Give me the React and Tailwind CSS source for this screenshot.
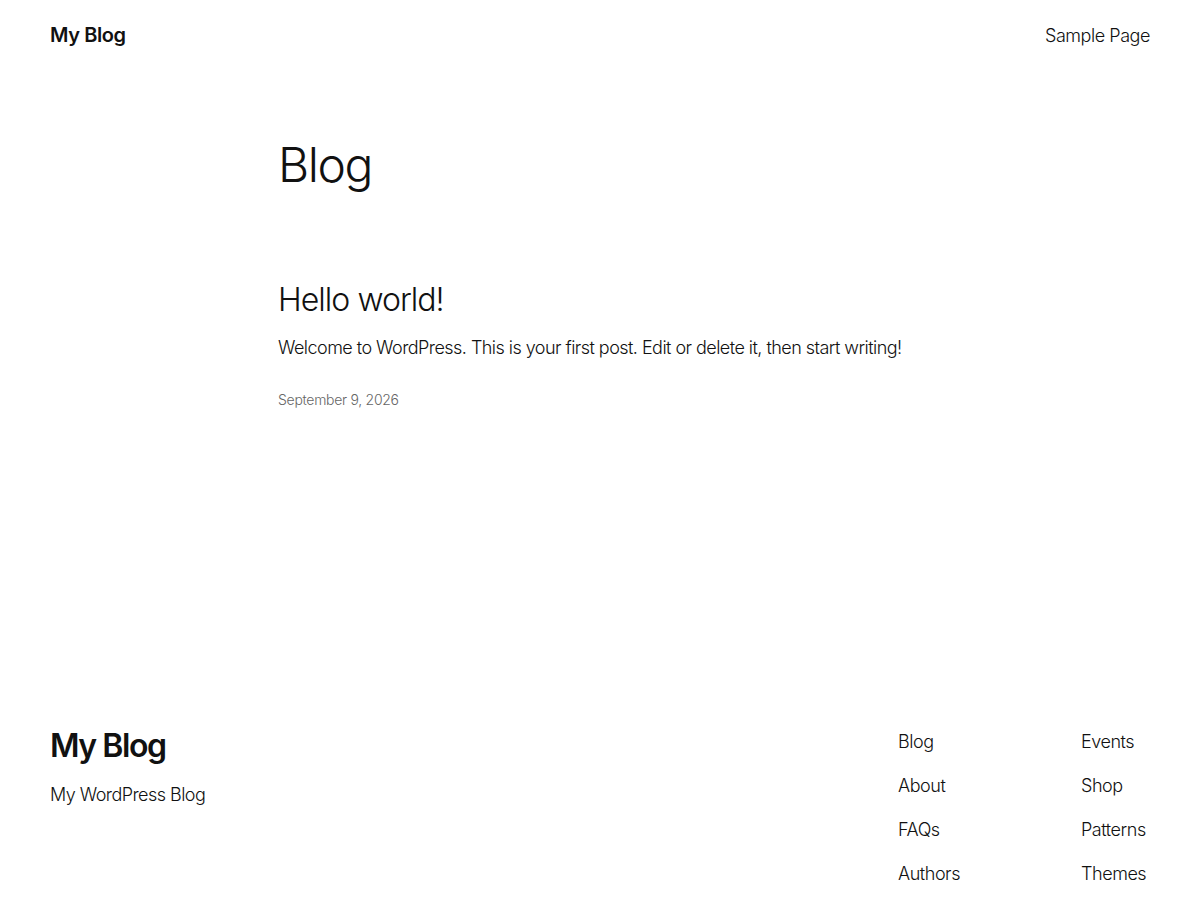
const FOOTER_LINKS = [
    ['Blog', 'About', 'FAQs', 'Authors'],
    ['Events', 'Shop', 'Patterns', 'Themes'],
];

const App = () => {
    return (
        <div className="min-h-[900px] bg-white text-[#111111] font-['Inter','Liberation_Sans',sans-serif]">
            <header className="h-[70px] flex items-center justify-between px-[50px]">
                <a className="text-[20px] font-semibold tracking-[-0.02em]">My Blog</a>
                <nav className="text-[18px] font-light tracking-[-0.025em]">Sample Page</nav>
            </header>

            <main className="max-w-[644px] mx-auto pt-[66px]">
                <h1 className="text-[48px] leading-[1.2] font-light tracking-[-0.03em]">Blog</h1>
                <article className="mt-[87px]">
                    <h2 className="text-[32px] leading-[1.2] font-light tracking-[-0.03em]">Hello world!</h2>
                    <p className="mt-[15px] text-[18px] leading-[1.6] font-light tracking-[-0.03em] whitespace-nowrap">
                        Welcome to WordPress. This is your first post. Edit or delete it, then start writing!
                    </p>
                    <p className="mt-[27px] text-[14px] leading-[20px] font-light text-[#666666] tracking-[-0.02em]">September 9, 2026</p>
                </article>
            </main>

            <footer className="mt-[317px] px-[50px] flex justify-between">
                <div>
                    <h2 className="text-[32px] leading-[1.2] font-semibold tracking-[-0.045em]">My Blog</h2>
                    <p className="mt-[16px] text-[18px] leading-[1.6] font-light tracking-[-0.03em]">My WordPress Blog</p>
                </div>
                <div className="flex">
                    {FOOTER_LINKS.map((col, i) => (
                        <ul key={i} className={`flex flex-col gap-[15px] ${i === 0 ? 'w-[183px]' : 'w-[69px]'}`}>
                            {col.map((link) => (
                                <li key={link} className="text-[18px] leading-[29px] font-light tracking-[-0.025em] whitespace-nowrap">{link}</li>
                            ))}
                        </ul>
                    ))}
                </div>
            </footer>
        </div>
    );
};

export default App;
